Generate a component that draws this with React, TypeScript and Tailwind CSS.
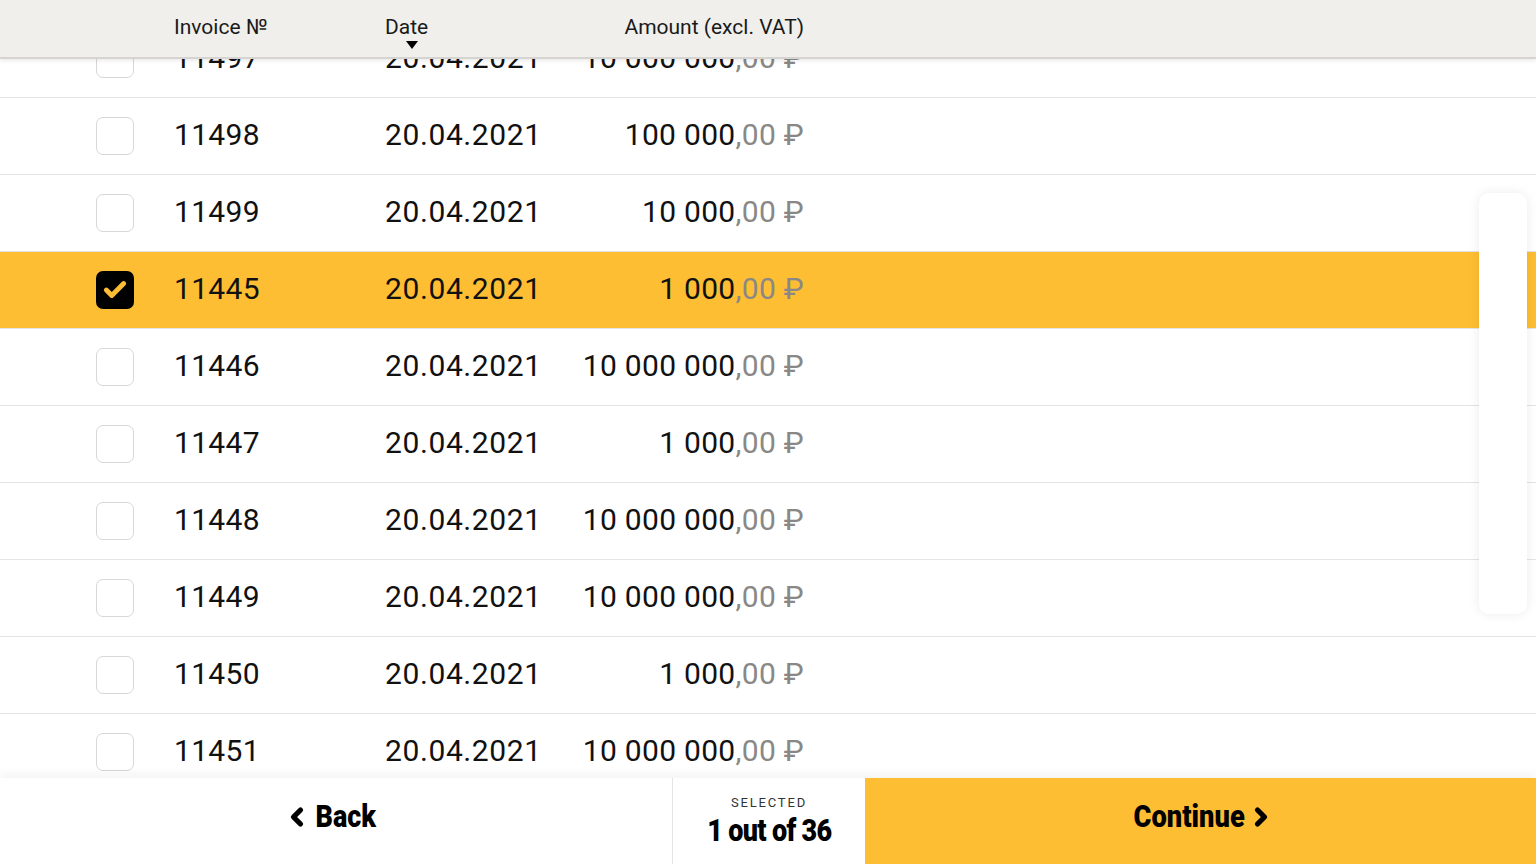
import { Check, ChevronLeft, ChevronRight } from "lucide-react"

type Row = { id: string; amount: string; checked?: boolean }

const rows: Row[] = [
  { id: "11497", amount: "10 000 000" },
  { id: "11498", amount: "100 000" },
  { id: "11499", amount: "10 000" },
  { id: "11445", amount: "1 000", checked: true },
  { id: "11446", amount: "10 000 000" },
  { id: "11447", amount: "1 000" },
  { id: "11448", amount: "10 000 000" },
  { id: "11449", amount: "10 000 000" },
  { id: "11450", amount: "1 000" },
  { id: "11451", amount: "10 000 000" },
]

const body = { fontFamily: "Roboto, 'Noto Sans', sans-serif" }

function InvoiceRow({ row }: { row: Row }) {
  return (
    <div
      className={`flex h-[77px] shrink-0 items-center border-b border-[#e6e4e1] pb-[4px] ${row.checked ? "bg-[#fdbe33]" : "bg-white"}`}
    >
      <div className="w-[174px] shrink-0 pl-[96px] pt-[4px]">
        {row.checked ? (
          <div className="flex h-[38px] w-[38px] items-center justify-center rounded-[7px] bg-black">
            <Check className="h-[26px] w-[26px] text-[#fdbe33]" strokeWidth={4.5} />
          </div>
        ) : (
          <div className="h-[38px] w-[38px] rounded-[7px] border border-[#d9d7d4] bg-white" />
        )}
      </div>
      <div className="w-[211px] shrink-0 text-[30px] tracking-[0.01em] text-[#111]">{row.id}</div>
      <div className="w-[153px] shrink-0 whitespace-nowrap text-[30px] tracking-[0.02em] text-[#111]">20.04.2021</div>
      <div className="w-[266px] shrink-0 whitespace-nowrap text-right text-[30px] tracking-[0.01em] text-[#111]">
        {row.amount}
        <span className="text-[#8a8886]">,00 ₽</span>
      </div>
    </div>
  )
}

export default function App() {
  return (
    <div className="relative flex h-[864px] w-[1536px] flex-col overflow-hidden bg-white" style={body}>
      <div className="relative flex-1 overflow-hidden">
        <div className="mt-[21px] flex flex-col">
          {rows.map((r) => (
            <InvoiceRow key={r.id} row={r} />
          ))}
        </div>

        <div className="absolute inset-x-0 top-0 flex h-[59px] items-start border-b-2 border-[#d6d4d1] bg-[#f0efec] pt-[12px] text-[21px] text-[#1a1a1a] shadow-[0_2px_4px_rgba(0,0,0,0.08)]">
          <div className="w-[174px] shrink-0" />
          <div className="w-[211px] shrink-0">Invoice №</div>
          <div className="relative w-[153px] shrink-0">
            Date
            <div className="absolute left-[21px] top-[29px] h-0 w-0 border-x-[6px] border-t-[8px] border-x-transparent border-t-black" />
          </div>
          <div className="w-[266px] shrink-0 whitespace-nowrap text-right">Amount (excl. VAT)</div>
        </div>

        <div className="absolute right-[9px] top-[193px] h-[421px] w-[48px] rounded-[10px] bg-white shadow-[0_0_12px_rgba(0,0,0,0.08)]" />
      </div>

      <div className="relative z-10 flex h-[86px] shrink-0 bg-white shadow-[0_-4px_10px_rgba(0,0,0,0.05)]">
        <div className="flex w-[673px] items-center justify-center border-r border-[#e6e4e1]">
          <div className="flex items-center pb-[8px] pr-[9px] text-black">
            <ChevronLeft className="h-[28px] w-[28px]" strokeWidth={4.5} />
            <span className="inline-block scale-x-[0.87] text-[31px] font-black">Back</span>
          </div>
        </div>
        <div className="flex w-[192px] flex-col items-center justify-center">
          <div className="text-[13px] tracking-[0.14em] text-[#333]">SELECTED</div>
          <div className="scale-x-[0.87] whitespace-nowrap text-[31px] font-black leading-[36px] tracking-tight text-black">
            1 out of 36
          </div>
        </div>
        <div className="flex flex-1 items-center justify-center bg-[#fdbe33]">
          <div className="flex items-center pb-[8px] text-black">
            <span className="inline-block -mr-[6px] scale-x-[0.88] text-[31px] font-black">Continue</span>
            <ChevronRight className="h-[28px] w-[28px]" strokeWidth={4.5} />
          </div>
        </div>
      </div>
    </div>
  )
}
